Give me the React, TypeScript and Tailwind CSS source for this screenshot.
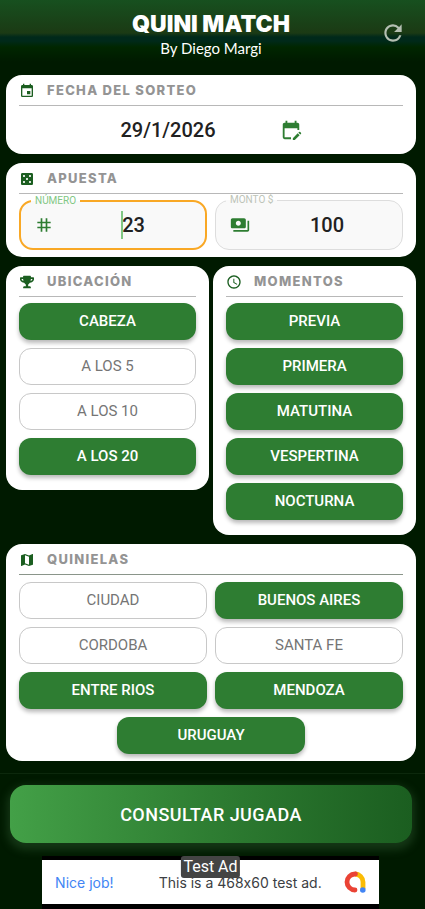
import { useState, type ReactNode } from 'react'
import { FaTrophy } from 'react-icons/fa'
import {
  MdAccessTime,
  MdCasino,
  MdEditCalendar,
  MdEvent,
  MdMap,
  MdPayments,
  MdRefresh,
  MdTag,
} from 'react-icons/md'

const UBICACIONES = ['CABEZA', 'A LOS 5', 'A LOS 10', 'A LOS 20']
const MOMENTOS = ['PREVIA', 'PRIMERA', 'MATUTINA', 'VESPERTINA', 'NOCTURNA']
const QUINIELAS = ['CIUDAD', 'BUENOS AIRES', 'CORDOBA', 'SANTA FE', 'ENTRE RIOS', 'MENDOZA', 'URUGUAY']

interface CardProps {
  icon: ReactNode
  title: string
  className?: string
  line?: string
  children: ReactNode
}

const Card = ({ icon, title, className = '', line = 'border-[#b8b8b8]', children }: CardProps) => (
  <section className={`rounded-[16px] bg-white px-[13px] ${className}`}>
    <div className={`flex h-[31px] items-center gap-3 border-b pt-0.5 ${line}`}>
      <span className="flex w-4 justify-center text-[#1b5e20]">{icon}</span>
      <h2 className="font-['Inter'] text-[13px] font-extrabold tracking-widest text-[#949494]">{title}</h2>
    </div>
    {children}
  </section>
)

interface ToggleProps {
  label: string
  active: boolean
  onClick: () => void
  className?: string
}

const Toggle = ({ label, active, onClick, className = '' }: ToggleProps) => (
  <button
    type="button"
    aria-pressed={active}
    onClick={onClick}
    className={`h-[37px] rounded-[12px] text-[15px] ${
      active
        ? 'bg-[#2e7d32] font-medium text-white shadow-[0_3px_4px_rgba(0,0,0,0.28)]'
        : 'border border-[#c8c8c8] bg-white text-[#757575]'
    } ${className}`}
  >
    {label}
  </button>
)

const AdMobLogo = () => (
  <svg viewBox="0 0 24 24" className="h-6 w-6" fill="none" aria-hidden="true">
    <path d="M12 4 A8 8 0 0 1 20 12 V19" stroke="#fbbc04" strokeWidth="4.8" />
    <path d="M12.5 4 H12 A8 8 0 0 0 12 20" stroke="#ea4335" strokeWidth="4.8" strokeLinecap="round" />
    <circle cx="19.8" cy="20" r="2.8" fill="#4285f4" />
  </svg>
)

const App = () => {
  const [numero, setNumero] = useState('23')
  const [monto, setMonto] = useState('100')
  const [selected, setSelected] = useState<string[]>([
    'CABEZA',
    'A LOS 20',
    ...MOMENTOS,
    'BUENOS AIRES',
    'ENTRE RIOS',
    'MENDOZA',
    'URUGUAY',
  ])

  const toggle = (name: string) =>
    setSelected((prev) => (prev.includes(name) ? prev.filter((n) => n !== name) : [...prev, name]))

  return (
    <div className="flex min-h-screen flex-col bg-[#001a00] font-['Roboto',sans-serif]">
      {/* Header */}
      <header className="relative h-[75px] bg-[linear-gradient(to_bottom,#17501f_0px,#1b3a14_33px,#00291a_37px,#00291a_41px,#002600_47px,#001a00_62px)] pt-[10px] pr-[9px] pl-1.5 text-center text-white">
        <h1 className="font-['Inter'] text-[23px] leading-7 font-black">QUINI MATCH</h1>
        <p className="font-['Lato'] text-[15px] leading-5">By Diego Margi</p>
        <button type="button" aria-label="Actualizar" className="absolute top-5 right-[19px] text-[#b4bfb2]">
          <MdRefresh size={26} />
        </button>
      </header>

      <main className="flex flex-col gap-[9px] pr-[9px] pl-1.5">
        <Card icon={<MdEvent size={18} />} title="FECHA DEL SORTEO">
          <div className="flex h-12 items-center justify-center gap-16">
            <span className="text-[20px] font-medium text-[#212121]">29/1/2026</span>
            <button type="button" aria-label="Cambiar fecha" className="text-[#2e7d32]">
              <MdEditCalendar size={22} />
            </button>
          </div>
        </Card>

        <Card icon={<MdCasino size={18} />} title="APUESTA" className="pb-[7px]">
          <div className="mt-1.5 grid grid-cols-2 gap-2">
            <div className="relative flex h-[50px] items-center gap-2 rounded-[14px] border-2 border-[#f9a825] bg-[#f9f9f9] pl-[13px]">
              <label
                htmlFor="numero"
                className="absolute -top-[7px] left-2.5 bg-linear-to-b from-white from-50% to-[#f9f9f9] to-50% px-1 text-[10px] leading-3 text-[#81c784]"
              >
                NÚMERO
              </label>
              <MdTag size={20} className="shrink-0 text-[#2e7d32]" />
              <input
                id="numero"
                inputMode="numeric"
                value={numero}
                onChange={(e) => setNumero(e.target.value)}
                className="w-full min-w-0 bg-transparent text-center text-[20px] font-medium text-[#212121] caret-[#81c784] outline-none"
              />
              <span className="absolute top-[9px] left-[100px] h-7 w-0.5 bg-[#81c784]" />
            </div>
            <div className="relative flex h-[50px] items-center gap-1.5 rounded-[14px] border border-[#dddddd] bg-[#f9f9f9] pr-1 pl-[14px]">
              <label
                htmlFor="monto"
                className="absolute -top-[7px] left-2.5 bg-linear-to-b from-white from-50% to-[#f9f9f9] to-50% px-1 text-[10px] leading-3 text-[#bdc4b8]"
              >
                MONTO $
              </label>
              <MdPayments size={20} className="shrink-0 text-[#2e7d32]" />
              <input
                id="monto"
                inputMode="numeric"
                value={monto}
                onChange={(e) => setMonto(e.target.value)}
                className="w-full min-w-0 bg-transparent text-center text-[20px] font-medium text-[#212121] outline-none"
              />
            </div>
          </div>
        </Card>

        <div className="grid grid-cols-2 items-start gap-1">
          <Card icon={<FaTrophy size={14} />} title="UBICACIÓN" className="pb-[15px]">
            <div className="mt-1.5 flex flex-col gap-2">
              {UBICACIONES.map((name) => (
                <Toggle key={name} label={name} active={selected.includes(name)} onClick={() => toggle(name)} />
              ))}
            </div>
          </Card>
          <Card icon={<MdAccessTime size={18} />} title="MOMENTOS" className="pb-[15px]">
            <div className="mt-1.5 flex flex-col gap-2">
              {MOMENTOS.map((name) => (
                <Toggle key={name} label={name} active={selected.includes(name)} onClick={() => toggle(name)} />
              ))}
            </div>
          </Card>
        </div>

        <Card icon={<MdMap size={18} />} title="QUINIELAS" line="border-[#8a958a]" className="pb-[7px]">
          <div className="mt-[7px] flex flex-wrap justify-center gap-2">
            {QUINIELAS.map((name) => (
              <Toggle
                key={name}
                label={name}
                active={selected.includes(name)}
                onClick={() => toggle(name)}
                className="w-[calc(50%-4px)]"
              />
            ))}
          </div>
        </Card>
      </main>

      {/* Bottom action and ad banner */}
      <footer className="mt-3 border-t border-[#0c280c]">
        <div className="pt-[11px] pr-[13px] pl-2.5">
          <button
            type="button"
            className="h-[58px] w-full rounded-[16px] bg-linear-to-r from-[#43a047] via-[#2e7d32] to-[#1b5e20] text-[18px] font-medium tracking-wide text-white shadow-[0_4px_8px_3px_rgba(46,90,48,0.45)]"
          >
            CONSULTAR JUGADA
          </button>
        </div>
        <div className="mt-[13px] flex justify-center pr-1">
          <a
            href="#ad"
            className="relative flex h-[53px] w-4/5 items-center justify-between border-t-4 border-b-[5px] border-black bg-white pr-3 pl-[13px] font-['Inter'] text-[14px] [font-feature-settings:'calt'_0]"
          >
            <span className="text-[#4285f4]">Nice job!</span>
            <span className="pl-6 text-[#3c4043]">This is a 468x60 test ad.</span>
            <AdMobLogo />
            <span className="absolute -top-1 left-1/2 -translate-x-1/2 rounded-[3px] bg-[#444444] px-0.5 font-['Roboto'] text-[16px] leading-[22px] whitespace-nowrap text-white">
              Test Ad
            </span>
          </a>
        </div>
      </footer>
    </div>
  )
}

export default App
